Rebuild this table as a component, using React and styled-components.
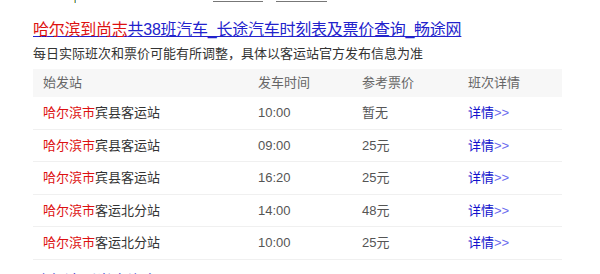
import React from "react";
import styled, { createGlobalStyle } from "styled-components";

const Global = createGlobalStyle`
  html, body { margin: 0; padding: 0; overflow: hidden; background: #fff; }
  body { font-family: "Liberation Sans", Arial, "Noto Sans CJK SC", sans-serif; }
`;

const Page = styled.div`
  width: 600px;
  height: 274px;
  overflow: hidden;
`;

const TopStrip = styled.div`
  position: relative;
  height: 3px;
`;

const Tick = styled.span`
  position: absolute;
  left: 74px;
  top: 0;
  width: 2px;
  height: 3px;
  background: linear-gradient(90deg, #e8c860 50%, #5aa0c8 50%);
`;

const CutLine = styled.span`
  position: absolute;
  top: 1px;
  left: ${(p) => p.$left}px;
  width: ${(p) => p.$width}px;
  height: 1px;
  background: #777;
`;

const Result = styled.div`
  padding-left: 33px;
  width: 529px;
`;

const Title = styled.a`
  display: block;
  margin-top: ${(p) => p.$top}px;
  font-size: 16px;
  line-height: 20px;
  letter-spacing: -0.25px;
  color: #2222cc;
  text-decoration: underline;
  white-space: nowrap;
`;

const Em = styled.span`
  color: #dd1111;
`;

const Sub = styled.div`
  margin-top: 4px;
  font-size: 13px;
  line-height: 20px;
  color: #333;
`;

const Table = styled.div`
  margin-top: 5px;
  display: grid;
  grid-template-columns: 215px 104px 106px 104px;
  font-size: 13px;
`;

const Row = styled.div`
  display: contents;
`;

const Head = styled.div`
  height: 28px;
  line-height: 28px;
  padding-left: 10px;
  background: #f7f7f7;
  color: #666;
`;

const Cell = styled.div`
  height: 31.5px;
  line-height: 31.5px;
  padding-left: 10px;
  border-bottom: 1px solid #f0f0f0;
  color: ${(p) => (p.$muted ? "#555" : "#333")};
  white-space: nowrap;
`;

const City = styled.span`
  color: #dd1111;
`;

const Detail = styled.a`
  color: #1111cc;
  text-decoration: none;
`;

const Arrow = styled.span`
  color: #6a6aee;
`;

const rows = [
  ["宾县客运站", "10:00", "暂无"],
  ["宾县客运站", "09:00", "25元"],
  ["宾县客运站", "16:20", "25元"],
  ["客运北分站", "14:00", "48元"],
  ["客运北分站", "10:00", "25元"],
];

export default function App() {
  return (
    <Page>
      <Global />
      <TopStrip>
        <Tick />
        <CutLine $left={213} $width={50} />
        <CutLine $left={276} $width={51} />
      </TopStrip>
      <Result>
        <Title $top={17}>
          <Em>哈尔滨到尚志</Em>共38班汽车_长途汽车时刻表及票价查询_畅途网
        </Title>
        <Sub>每日实际班次和票价可能有所调整，具体以客运站官方发布信息为准</Sub>
        <Table>
          <Row>
            <Head>始发站</Head>
            <Head>发车时间</Head>
            <Head>参考票价</Head>
            <Head>班次详情</Head>
          </Row>
          {rows.map((r, i) => (
            <Row key={i}>
              <Cell>
                <City>哈尔滨市</City>
                {r[0]}
              </Cell>
              <Cell $muted>{r[1]}</Cell>
              <Cell $muted>{r[2]}</Cell>
              <Cell>
                <Detail>
                  详情<Arrow>&gt;&gt;</Arrow>
                </Detail>
              </Cell>
            </Row>
          ))}
        </Table>
        <Title $top={12}>哈尔滨到尚志汽车</Title>
      </Result>
    </Page>
  );
}
